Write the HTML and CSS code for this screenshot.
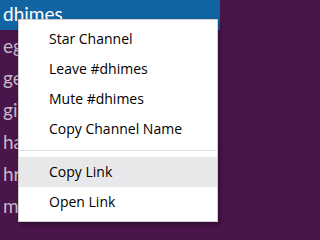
FILE: index.html
```html
<!DOCTYPE html>
<html>
<head>
<meta charset="utf-8">
<link rel="stylesheet" href="styles.css">
</head>
<body>
<div class="sidebar">
  <div class="channel active">dhimes</div>
  <div class="channel">eggs</div>
  <div class="channel">general</div>
  <div class="channel">giphy</div>
  <div class="channel">hackers</div>
  <div class="channel">hr</div>
  <div class="channel">music</div>
</div>
<div class="menu">
  <div class="item">Star Channel</div>
  <div class="item">Leave #dhimes</div>
  <div class="item">Mute #dhimes</div>
  <div class="item">Copy Channel Name</div>
  <div class="sep"></div>
  <div class="item hover">Copy Link</div>
  <div class="item">Open Link</div>
</div>
</body>
</html>
```
FILE: styles.css
```css
html, body {
  margin: 0;
  padding: 0;
  width: 220px;
  height: 227px;
  overflow: hidden;
  background: #4a154b;
}
.sidebar {
  display: flex;
  flex-direction: column;
  font-family: Lato, "Noto Sans", sans-serif;
  font-size: 19px;
  color: #c9b9c9;
}
.channel {
  height: 32px;
  line-height: 32px;
  padding-left: 3px;
  white-space: nowrap;
  overflow: hidden;
}
.channel.active {
  height: 30px;
  line-height: 28px;
  background: #1264a3;
  color: #fff;
}
.menu {
  position: absolute;
  left: 18px;
  top: 19px;
  width: 198px;
  padding: 4px 0;
  background: #fff;
  border: 1px solid #cfcfcf;
  box-shadow: 2px 3px 5px rgba(0, 0, 0, 0.35);
  font-family: "Open Sans", "Noto Sans", sans-serif;
  font-size: 14px;
  color: #000;
}
.item {
  height: 30px;
  line-height: 30px;
  padding-left: 30px;
  white-space: nowrap;
}
.item.hover {
  background: #e8e8ea;
}
.sep {
  height: 1px;
  margin: 6px 0;
  background: #e2e2e2;
}
```
